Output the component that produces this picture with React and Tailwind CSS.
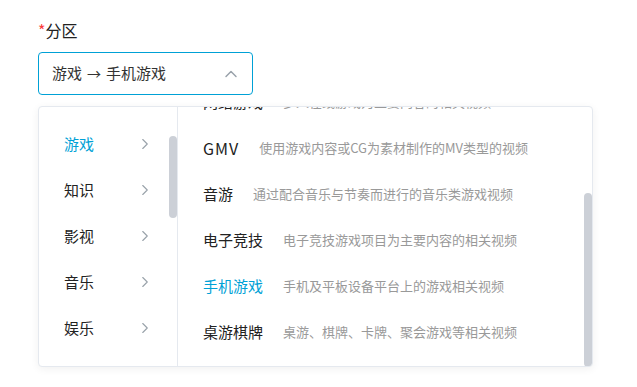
import { ChevronUp, ChevronRight } from 'lucide-react'

const parents = [
  { name: '游戏', active: true },
  { name: '知识' },
  { name: '影视' },
  { name: '音乐' },
  { name: '娱乐' },
]

const children = [
  { name: '网络游戏', desc: '多人在线游戏为主要内容的相关视频' },
  { name: 'GMV', desc: '使用游戏内容或CG为素材制作的MV类型的视频' },
  { name: '音游', desc: '通过配合音乐与节奏而进行的音乐类游戏视频' },
  { name: '电子竞技', desc: '电子竞技游戏项目为主要内容的相关视频' },
  { name: '手机游戏', desc: '手机及平板设备平台上的游戏相关视频', active: true },
  { name: '桌游棋牌', desc: '桌游、棋牌、卡牌、聚会游戏等相关视频' },
]

export default function App() {
  return (
    <div
      className="w-[637px] h-[387px] bg-white overflow-hidden pl-[38px] pt-[19px]"
      style={{ fontFamily: '"Noto Sans CJK SC", "Noto Sans", sans-serif' }}
    >
      <div className="text-[16px] leading-[22px] text-[#222]">
        <span className="text-[#fb3b3b]">*</span>分区
      </div>

      <div className="mt-[11px] w-[215px] h-[43px] border border-[#00a1d6] rounded-[4px] flex items-center pl-[13px] pr-[11px]">
        <span className="flex-1 flex items-center text-[15px] text-[#333]">
          <span>游戏</span>
          <span className="mx-[5px] text-[14px]">→</span>
          <span>手机游戏</span>
        </span>
        <ChevronUp className="w-[20px] h-[20px] text-[#99a2aa]" strokeWidth={1.75} />
      </div>

      <div className="mt-[11px] w-[555px] h-[261px] border border-[#e5e9ef] rounded-[4px] shadow-[0_2px_8px_rgba(0,0,0,0.06)] flex overflow-hidden bg-white">
        <div className="w-[139px] border-r border-[#e5e9ef] relative pt-[14px]">
          {parents.map((p) => (
            <div key={p.name} className="h-[46px] flex items-center pl-[25px] pr-[23px]">
              <span className={`flex-1 text-[15px] ${p.active ? 'text-[#00a1d6]' : 'text-[#222]'}`}>{p.name}</span>
              <ChevronRight className="w-[18px] h-[18px] text-[#99a2aa]" strokeWidth={1.5} />
            </div>
          ))}
          <div className="absolute right-0 top-[29px] w-[8px] h-[82px] rounded-[4px] bg-[#ccd0d7]" />
        </div>

        <div className="flex-1 relative overflow-hidden">
          <div className="-mt-[28px]">
            {children.map((c) => (
              <div key={c.name} className="h-[46px] flex items-center pl-[25px] gap-[20px]">
                <span className={`text-[15px] ${c.name === 'GMV' ? 'tracking-[1px] text-[16px]' : ''} ${c.active ? 'text-[#00a1d6]' : 'text-[#222]'}`}>{c.name}</span>
                <span className="text-[13px] text-[#999]">{c.desc}</span>
              </div>
            ))}
          </div>
          <div className="absolute right-0 top-[86px] w-[8px] h-[174px] rounded-[4px] bg-[#ccd0d7]" />
        </div>
      </div>
    </div>
  )
}
